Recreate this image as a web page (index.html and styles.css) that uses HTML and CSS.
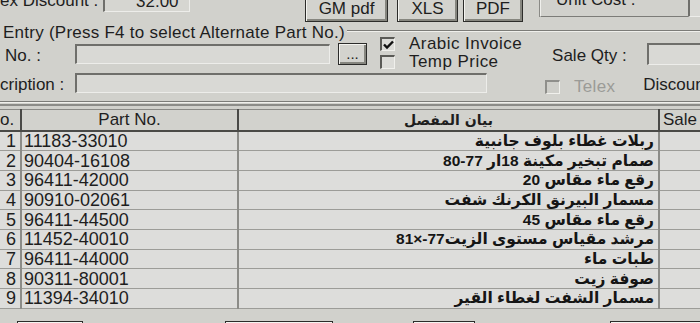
FILE: index.html
```html
<!DOCTYPE html>
<html lang="en">
<head>
<meta charset="utf-8">
<title>Parts Entry</title>
<link rel="stylesheet" href="styles.css">
</head>
<body>
<div class="screen">
  <div class="toprow">
    <span class="disc">ex Discount :</span>
    <div class="tbox disc-box">32.00</div>
    <button class="btn gm">GM pdf</button>
    <button class="btn xls">XLS</button>
    <button class="btn pdf">PDF</button>
    <div class="unit">Unit Cost :</div>
    <div class="tbox unit-box"></div>
  </div>

  <div class="legend-row">
    <span class="legend">Entry (Press F4 to select Alternate Part No.)</span>
    <span class="gline"></span>
  </div>

  <div class="row3">
    <span class="lbl no-lbl">No. :</span>
    <div class="tbox part-box"></div>
    <button class="btn dots">...</button>
    <div class="checks">
      <label class="chk"><span class="box"><svg width="11" height="10" viewBox="0 0 11 10"><path d="M1 4.5 L4 7.5 L10 1.5" fill="none" stroke="#111" stroke-width="2.4"/></svg></span>Arabic Invoice</label>
      <label class="chk"><span class="box"></span>Temp Price</label>
    </div>
    <span class="lbl qty-lbl">Sale Qty :</span>
    <div class="tbox qty-box"></div>
  </div>

  <div class="row4">
    <span class="lbl desc-lbl">cription :</span>
    <div class="tbox desc-box"></div>
    <label class="chk telex"><span class="box dis"></span>Telex</label>
    <span class="lbl discou">Discount</span>
  </div>

  <div class="gbottom"></div>

  <table class="grid">
    <colgroup>
      <col class="c-no"><col class="c-part"><col class="c-desc"><col class="c-sale">
    </colgroup>
    <thead>
      <tr><th class="h-no">o.</th><th>Part No.</th><th class="ar">بيان المفصل</th><th class="h-sale">Sale</th></tr>
    </thead>
    <tbody>
      <tr><td class="n">1</td><td class="p">11183-33010</td><td class="d">ربلات غطاء بلوف جانبية</td><td></td></tr>
      <tr><td class="n">2</td><td class="p">90404-16108</td><td class="d">صمام تبخير مكينة 18ار 77-80</td><td></td></tr>
      <tr><td class="n">3</td><td class="p">96411-42000</td><td class="d">رقع ماء مقاس 20</td><td></td></tr>
      <tr><td class="n">4</td><td class="p">90910-02061</td><td class="d">مسمار البيرنق الكرنك شفت</td><td></td></tr>
      <tr><td class="n">5</td><td class="p">96411-44500</td><td class="d">رقع ماء مقاس 45</td><td></td></tr>
      <tr><td class="n">6</td><td class="p">11452-40010</td><td class="d">مرشد مقياس مستوى الزيت77-×81</td><td></td></tr>
      <tr><td class="n">7</td><td class="p">96411-44000</td><td class="d">طبات ماء</td><td></td></tr>
      <tr><td class="n">8</td><td class="p">90311-80001</td><td class="d">صوفة زيت</td><td></td></tr>
      <tr><td class="n">9</td><td class="p">11394-34010</td><td class="d">مسمار الشفت لغطاء القير</td><td></td></tr>
    </tbody>
  </table>

  <div class="bottom-row">
    <button class="btn b1"></button>
    <button class="btn b2"></button>
    <button class="btn b3"></button>
    <button class="btn b4"></button>
  </div>
</div>
</body>
</html>
```

FILE: styles.css
```css
html, body {
  margin: 0;
  padding: 0;
}
body {
  width: 700px;
  height: 323px;
  overflow: hidden;
  background: #d1d1cc;
  font-family: "Liberation Sans", Arial, sans-serif;
  font-size: 17px;
  color: #1e1e1e;
}
.screen {
  width: 700px;
  height: 323px;
  overflow: hidden;
}

/* generic controls */
.tbox {
  box-sizing: border-box;
  background: #d9d9d5;
  border-top: 2px solid #6f6f6b;
  border-left: 2px solid #6f6f6b;
  border-bottom: 1px solid #ededea;
  border-right: 1px solid #ededea;
  flex: none;
}
.btn {
  box-sizing: border-box;
  font: inherit;
  color: #1e1e1e;
  background: #d3d3ce;
  border: 1px solid #2c2c2a;
  box-shadow: inset 1px 1px 0 #f4f4f0, inset -2px -2px 0 #86867f;
  padding: 0;
  flex: none;
}
.lbl {
  white-space: nowrap;
  flex: none;
}

/* top row (partly above the visible area) */
.toprow {
  display: flex;
  align-items: flex-start;
  height: 32px;
  margin-top: -10px;
}
.disc {
  width: 103px;
  line-height: 20px;
  padding-top: 1px;
  white-space: nowrap;
  flex: none;
}
.disc-box {
  width: 87px;
  height: 22px;
  line-height: 20px;
  padding-left: 31px;
  background: #d6d6d1;
}
.toprow .btn {
  height: 32px;
  padding-top: 5px;
}
.gm { margin-left: 115px; width: 83px; }
.xls { margin-left: 9px; width: 61px; }
.pdf { margin-left: 5px; width: 60px; }
.unit {
  margin-left: 17px;
  width: 148px;
  height: 27px;
  box-sizing: border-box;
  padding-left: 15px;
  line-height: 20px;
  border-left: 1px solid #f0f0ec;
  border-bottom: 1px solid #7c7c78;
  box-shadow: -1px 0 0 #8a8a86;
  flex: none;
}
.unit-box {
  width: 40px;
  height: 27px;
}

/* group legend */
.legend-row {
  display: flex;
  align-items: flex-start;
  height: 16px;
}
.legend {
  white-space: nowrap;
  padding-left: 3px;
  margin-top: 3px;
  line-height: 16px;
  letter-spacing: 0.25px;
  flex: none;
}
.gline {
  flex: 1;
  height: 1px;
  margin-left: 2px;
  margin-top: 8px;
  background: #7c7c78;
  box-shadow: 0 1px 0 #f0f0ec;
}

/* row 3 */
.row3 {
  display: flex;
  align-items: center;
  height: 32px;
}
.no-lbl {
  width: 70px;
  padding-left: 5px;
  padding-top: 4px;
}
.part-box {
  width: 255px;
  height: 20px;
}
.dots {
  margin-left: 8px;
  width: 29px;
  height: 22px;
  line-height: 12px;
  font-size: 15px;
}
.checks {
  display: flex;
  flex-direction: column;
  margin-left: 13px;
  margin-top: -2px;
}
.chk {
  display: flex;
  align-items: center;
  height: 17.5px;
  white-space: nowrap;
  letter-spacing: 0.45px;
}
.box {
  box-sizing: border-box;
  width: 15px;
  height: 14px;
  margin-right: 14px;
  background: #dcdcd8;
  border-top: 2px solid #5a5a56;
  border-left: 2px solid #5a5a56;
  border-bottom: 1px solid #f0f0ec;
  border-right: 1px solid #f0f0ec;
  display: flex;
  align-items: center;
  justify-content: center;
  flex: none;
}
.box svg { display: block; }
.qty-lbl {
  margin-left: 30px;
  width: 95px;
  padding-top: 3px;
}
.qty-box {
  width: 60px;
  height: 22px;
}

/* row 4 */
.row4 {
  display: flex;
  align-items: center;
  height: 26px;
}
.desc-lbl {
  width: 75px;
  padding-top: 3px;
}
.desc-box {
  width: 412px;
  height: 20px;
}
.telex {
  margin-left: 58px;
  margin-top: 8px;
  color: #9b9b97;
  letter-spacing: 0.3px;
}
.box.dis {
  background: #cfcfca;
  border-top-color: #8f8f8b;
  border-left-color: #8f8f8b;
}
.discou {
  margin-left: 28px;
  padding-top: 4px;
}

/* group bottom etched double line */
.gbottom {
  margin-top: 5px;
  height: 1px;
  background: #7c7c78;
  border-bottom: 1px solid #f0f0ec;
  box-shadow: 0 3px 0 #8c8c88;
}

/* table */
.grid {
  margin-top: 6px;
  border-collapse: collapse;
  table-layout: fixed;
  width: 720px;
  background: #dddddb;
}
.c-no { width: 21px; }
.c-part { width: 217px; }
.c-desc { width: 421px; }
.c-sale { width: 61px; }
.grid th {
  height: 19px;
  padding: 0;
  font-weight: normal;
  font-size: 17px;
  background: #d2d2cd;
  border-right: 2px solid #4a4a47;
  border-bottom: 2px solid #4a4a47;
  border-top: 1px solid #8a8a86;
  box-sizing: border-box;
  text-align: center;
  white-space: nowrap;
  overflow: hidden;
}
.grid th.h-no { text-align: left; }
.grid th.h-sale { text-align: left; padding-left: 3px; border-right: none; }
.grid th.ar {
  font-family: "DejaVu Sans", sans-serif;
  font-weight: bold;
  font-size: 14px;
}
.grid td {
  height: 19.7px;
  padding: 0;
  box-sizing: border-box;
  border-right: 1px solid #9c9c98;
  border-bottom: 1px solid #9c9c98;
  white-space: nowrap;
  overflow: hidden;
  line-height: 18px;
}
.grid td.n {
  text-align: right;
  padding-right: 4px;
  font-size: 18px;
  border-right: 2px solid #8c8c88;
}
.grid td.p {
  padding-left: 2px;
  font-size: 18px;
  border-right: 2px solid #8c8c88;
}
.grid td.d {
  direction: rtl;
  text-align: right;
  padding-right: 4px;
  font-family: "Liberation Sans", "DejaVu Sans", sans-serif;
  font-weight: bold;
  font-size: 15.5px;
  color: #151515;
  border-right: 2px solid #8c8c88;
}

/* bottom buttons (mostly below view) */
.bottom-row {
  display: flex;
  margin-top: 12px;
}
.bottom-row .btn {
  height: 24px;
}
.b1 { margin-left: 17px; width: 66px; }
.b2 { margin-left: 142px; width: 108px; }
.b3 { margin-left: 80px; width: 62px; }
.b4 { margin-left: 135px; width: 100px; }
```
